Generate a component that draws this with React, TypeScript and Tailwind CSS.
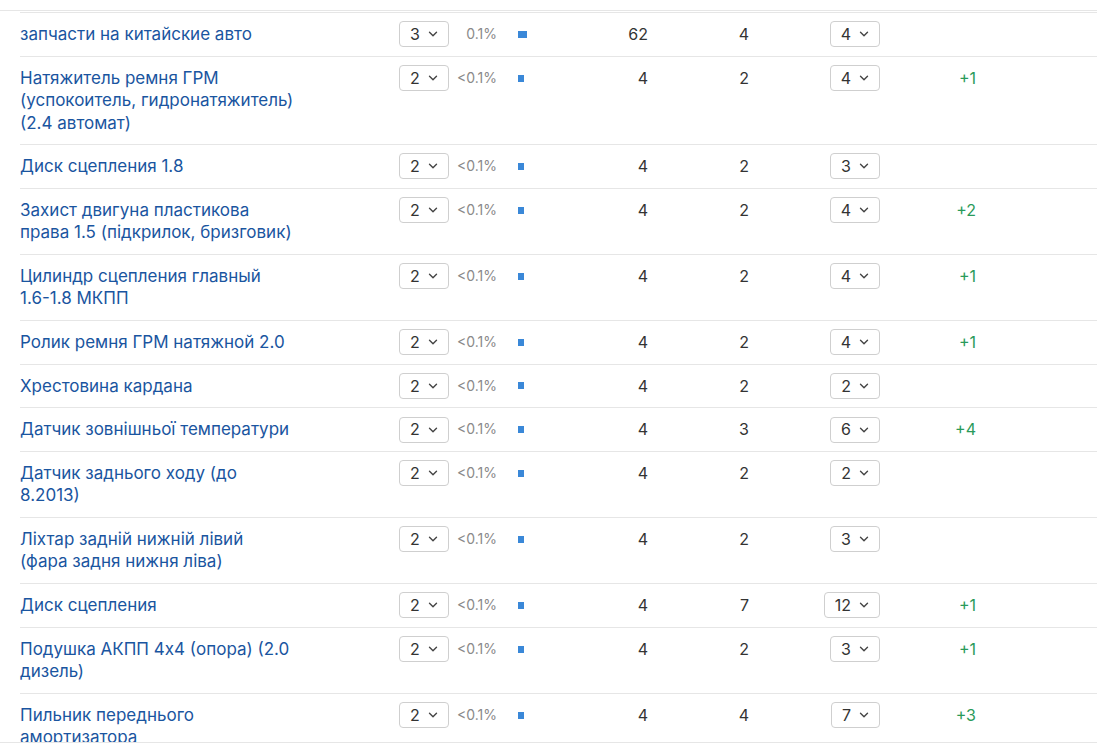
import React from 'react';
import { ChevronDown } from 'lucide-react';

type Row = {
  keyword: string[];
  pos: number;
  share: string;
  bar: number;
  volume: number;
  results: number;
  best: number;
  diff?: string;
};

// keyword lines are split the way the original table wraps them
const rows: Row[] = [
  { keyword: ['запчасти на китайские авто'], pos: 3, share: '0.1%', bar: 9, volume: 62, results: 4, best: 4 },
  { keyword: ['Натяжитель ремня ГРМ', '(успокоитель, гидронатяжитель)', '(2.4 автомат)'], pos: 2, share: '<0.1%', bar: 6, volume: 4, results: 2, best: 4, diff: '+1' },
  { keyword: ['Диск сцепления 1.8'], pos: 2, share: '<0.1%', bar: 6, volume: 4, results: 2, best: 3 },
  { keyword: ['Захист двигуна пластикова', 'права 1.5 (підкрилок, бризговик)'], pos: 2, share: '<0.1%', bar: 6, volume: 4, results: 2, best: 4, diff: '+2' },
  { keyword: ['Цилиндр сцепления главный', '1.6-1.8 МКПП'], pos: 2, share: '<0.1%', bar: 6, volume: 4, results: 2, best: 4, diff: '+1' },
  { keyword: ['Ролик ремня ГРМ натяжной 2.0'], pos: 2, share: '<0.1%', bar: 6, volume: 4, results: 2, best: 4, diff: '+1' },
  { keyword: ['Хрестовина кардана'], pos: 2, share: '<0.1%', bar: 6, volume: 4, results: 2, best: 2 },
  { keyword: ['Датчик зовнішньої температури'], pos: 2, share: '<0.1%', bar: 6, volume: 4, results: 3, best: 6, diff: '+4' },
  { keyword: ['Датчик заднього ходу (до', '8.2013)'], pos: 2, share: '<0.1%', bar: 6, volume: 4, results: 2, best: 2 },
  { keyword: ['Ліхтар задній нижній лівий', '(фара задня нижня ліва)'], pos: 2, share: '<0.1%', bar: 6, volume: 4, results: 2, best: 3 },
  { keyword: ['Диск сцепления'], pos: 2, share: '<0.1%', bar: 6, volume: 4, results: 7, best: 12, diff: '+1' },
  { keyword: ['Подушка АКПП 4x4 (опора) (2.0', 'дизель)'], pos: 2, share: '<0.1%', bar: 6, volume: 4, results: 2, best: 3, diff: '+1' },
  { keyword: ['Пильник переднього', 'амортизатора'], pos: 2, share: '<0.1%', bar: 6, volume: 4, results: 4, best: 7, diff: '+3' },
];

function NumSelect({ value }: { value: number }) {
  return (
    <div className="flex h-[26px] items-center gap-[6px] rounded-[4px] border border-[#cfcfcf] bg-white pl-[10px] pr-[8px] text-[16px] text-[#333]">
      <span>{value}</span>
      <ChevronDown size={14} strokeWidth={2.4} className="text-[#444]" />
    </div>
  );
}

export default function App() {
  return (
    <div className="min-h-[744px] bg-white pt-[10px] font-['Inter','Noto_Sans',sans-serif]">
      <div className="h-[733px] overflow-hidden border-t border-b border-[#e6e6e6] pt-[1px]">
        {rows.map((r, i) => (
          <div key={i} className="ml-[20px] flex border-t border-[#e6e6e6] py-[10.2px] text-[16px] leading-[22.33px]">
            {/* keyword */}
            <div className="w-[379px] shrink-0 whitespace-nowrap text-[17px] text-[#1a55a0]">
              {r.keyword.map((line, j) => (
                <div key={j}>{line}</div>
              ))}
            </div>
            {/* position select */}
            <div className="flex h-[22.33px] w-[50px] shrink-0 items-center">
              <NumSelect value={r.pos} />
            </div>
            {/* share */}
            <div className="flex h-[22.33px] w-[48px] shrink-0 items-center justify-end text-[14px] text-[#8a8a8a]">
              {r.share}
            </div>
            {/* bar */}
            <div className="flex h-[22.33px] w-[60px] shrink-0 items-center pl-[21px]">
              <div className="h-[7px] bg-[#3a88d8]" style={{ width: r.bar }} />
            </div>
            {/* volume */}
            <div className="w-[91px] shrink-0 text-right text-[#333]">{r.volume}</div>
            {/* results */}
            <div className="w-[101px] shrink-0 text-right text-[#333]">{r.results}</div>
            {/* best select */}
            <div className="flex h-[22.33px] w-[131px] shrink-0 items-center justify-end">
              <NumSelect value={r.best} />
            </div>
            {/* diff */}
            <div className="w-[96px] shrink-0 text-right text-[#2a9a5a]">{r.diff}</div>
          </div>
        ))}
      </div>
    </div>
  );
}
